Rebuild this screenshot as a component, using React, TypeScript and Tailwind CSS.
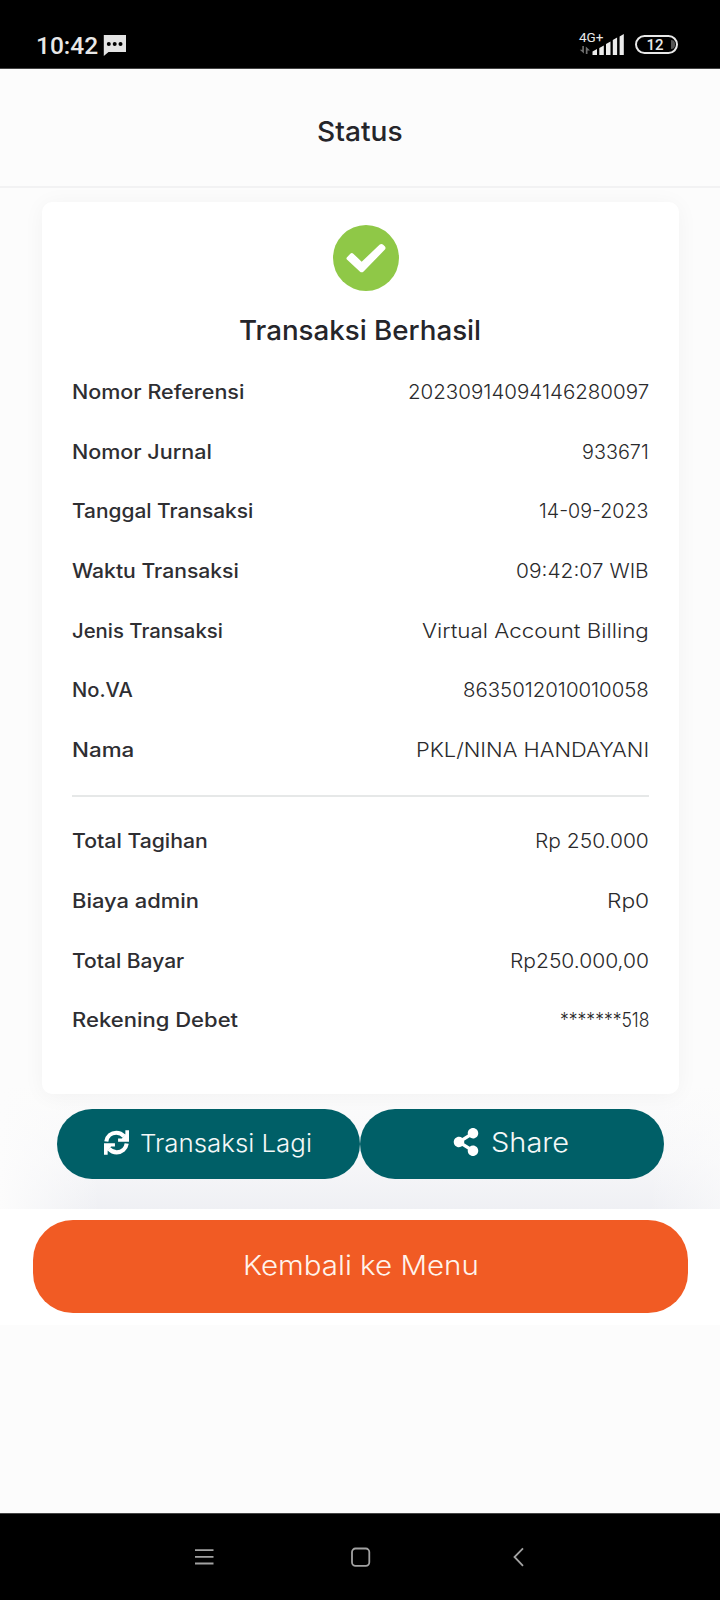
import { useLayoutEffect, useRef, useState } from "react";
import { FaShareAlt } from "react-icons/fa";

type FitProps = { text: string; width: number; className?: string; right?: boolean };

/* Text stretched horizontally to an exact advance width. */
function Fit({ text, width, className = "", right = false }: FitProps) {
  const ref = useRef<HTMLSpanElement>(null);
  const [scale, setScale] = useState(1);
  useLayoutEffect(() => {
    if (ref.current) setScale(width / ref.current.offsetWidth);
  }, [text, width]);
  return (
    <span className={`flex ${right ? "justify-end" : "justify-start"} ${className}`} style={{ width }}>
      <span
        ref={ref}
        className={`shrink-0 whitespace-nowrap ${right ? "origin-right" : "origin-left"}`}
        style={{ transform: `scaleX(${scale})` }}
      >
        {text}
      </span>
    </span>
  );
}

type Row = [label: string, labelWidth: number, value: string, valueWidth: number];

const details: Row[] = [
  ["Nomor Referensi", 172, "20230914094146280097", 241],
  ["Nomor Jurnal", 140, "933671", 67],
  ["Tanggal Transaksi", 181, "14-09-2023", 110],
  ["Waktu Transaksi", 167, "09:42:07 WIB", 133],
  ["Jenis Transaksi", 151, "Virtual Account Billing", 227],
  ["No.VA", 61, "8635012010010058", 186],
  ["Nama", 62, "PKL/NINA HANDAYANI", 233],
];

const totals: Row[] = [
  ["Total Tagihan", 136, "Rp 250.000", 114],
  ["Biaya admin", 127, "Rp0", 42],
  ["Total Bayar", 112, "Rp250.000,00", 139],
  ["Rekening Debet", 166, "*******518", 89],
];

function Rows({ rows }: { rows: Row[] }) {
  return (
    <dl>
      {rows.map(([label, lw, value, vw]) => (
        <div key={label} className="flex h-[59.6px] items-center justify-between pt-[1px] text-[19.5px]">
          <dt className="pl-[0.5px] font-medium text-[#2e2e32]">
            <Fit text={label} width={lw} />
          </dt>
          <dd className="font-light text-[#2a2a2c]">
            <Fit text={value} width={vw} right />
          </dd>
        </div>
      ))}
    </dl>
  );
}

function RefreshIcon() {
  return (
    <svg className="-mt-[2px] -ml-[1px] size-[25px] shrink-0" viewBox="0 0 24 24">
      <path d="M2.2 11C3 5.8 7 2.6 11.8 2.6c3 0 5.500 1.200 7.500 3.400" fill="none" stroke="#fff" strokeWidth="4" />
      <path d="M24 .3V11.200H13.500V8.200H17.200L20.500 4V.3z" fill="#fff" />
      <path d="M21.8 13C21 18.200 17 21.400 12.200 21.400c-3 0-5.500-1.200-7.500-3.400" fill="none" stroke="#fff" strokeWidth="4" />
      <path d="M0 23.700V12.800H10.500V15.800H6.800L3.500 20V23.700z" fill="#fff" />
    </svg>
  );
}

function StatusBar() {
  return (
    <div className="flex h-[69px] items-start justify-between border-b border-[#444] bg-black pr-[42px] pl-[36px] text-[#e8e8e8]">
      <div className="flex pt-[30px] font-[Roboto]">
        <Fit text="10:42" width={62} className="text-[24.5px] leading-[32px] font-medium" />
        <svg className="mt-[5px] ml-[5px] h-[21px] w-[23px]" viewBox="0 0 23 21">
          <path d="M.8 0h22.2v17H5.5L.8 21z" fill="#e4e4e4" />
          <circle cx="5.8" cy="9" r="2" />
          <circle cx="11.7" cy="9" r="2" />
          <circle cx="17.5" cy="9" r="2" />
        </svg>
      </div>
      <div className="flex font-[Roboto]">
        <div className="flex w-[46px] flex-col pt-[30px]">
          <span className="h-[14px] text-[13.5px] leading-[15px]">4G+</span>
        </div>
        <svg className="-ml-[46px] h-[25px] w-[46px] translate-y-[31px]" viewBox="0 0 46 25">
          <path d="M3.3 15h1.6v7.5L.8 18.8h2.5zM6.8 23V15.5l4.2 4H8.5V23z" fill="#707070" />
          <path
            d="M13.5 20.5l4.500-2.500v6h-4.500zM20.300 17l4.500-2.500v9.500h-4.500zM27 13l4.500-2.500v13.500H27zM33.800 9l4.300-2.500v17.500h-4.300zM40.600 5.500l4.200-2.500v21h-4.200z"
            fill="#ececec"
          />
        </svg>
        <div className="mt-[34.5px] ml-[10px] flex h-[19px] w-[43px] items-center justify-center rounded-full border-2 border-[#e8e8e8] pl-[2px] text-[15px] leading-none font-medium">
          <span className="flex-1 pt-[2px] text-center">12</span>
          <span className="mr-[1px] h-[9px] w-[4px] rounded-r-full bg-[#555]" />
        </div>
      </div>
    </div>
  );
}

export default function App() {
  return (
    <div className="flex h-[1600px] w-[720px] flex-col overflow-hidden bg-[#fcfcfc] font-[Inter,sans-serif]">
      <StatusBar />
      <header className="flex h-[118.5px] shrink-0 items-center justify-center border-b-2 border-[#f2f2f3] pt-[9px] text-[#25252a]">
        <Fit text="Status" width={86} className="text-[27.5px] font-medium" />
      </header>

      <main className="flex h-[1021px] shrink-0 flex-col bg-[linear-gradient(to_right,#fcfcfc_0%,#fcfcfc00_14%,#fcfcfc00_90%,#fcfcfc88_100%),linear-gradient(to_bottom,#fcfcfc_88%,#f7f7f9_95%,#eff0f4_100%)] pt-[14px]">
        <section className="mx-[42px] flex h-[892.5px] w-[637px] shrink-0 flex-col rounded-[10px] bg-white pr-[30px] pl-[29.5px] pt-[23.5px] shadow-[0_2px_22px_rgba(0,0,0,0.045)]">
          <svg className="ml-[261.5px] size-[66px] shrink-0" viewBox="0 0 66 66">
            <circle cx="33" cy="33" r="33" fill="#8fc847" />
            <path
              d="M13.800 32.600L17.300 28.700Q18.800 27.300 20.300 28.700L28.700 36.800L46.500 19.700Q48.500 18.200 50.200 19.800L52 21.600Q53.200 23.200 51.700 24.800L30.600 46.500Q28.700 48.200 26.800 46.500L13.900 34.600Q13 33.600 13.800 32.600z"
              fill="#fff"
            />
          </svg>
          <h1 className="mt-[18.5px] flex h-[42px] items-center justify-center text-[27.5px] font-medium text-[#25252a]">
            <Fit text="Transaksi Berhasil" width={242} />
          </h1>
          <div className="mt-[11px]">
            <Rows rows={details} />
          </div>
          <hr className="mt-[15px] mb-[15px] border-0 border-t-2 border-[#e6e8e8]" />
          <Rows rows={totals} />
        </section>

        <div className="mt-[14.5px] flex px-[56.5px] text-[#f4f8f8]">
          <button className="flex h-[70px] w-[304px] items-center rounded-full bg-[#005f67] pl-[48px]">
            <RefreshIcon />
            <Fit text="Transaksi Lagi" width={172} className="ml-[11.5px] text-[24.5px] font-light" />
          </button>
          <button className="flex h-[70px] w-[304px] items-center rounded-full bg-[#005f67] pl-[92px]">
            <FaShareAlt className="-mt-[4px] size-[28px] text-white" />
            <Fit text="Share" width={78} className="-mt-[1px] ml-[11.5px] text-[27.5px] font-light" />
          </button>
        </div>
      </main>

      <footer className="flex h-[116px] shrink-0 items-center bg-white pr-[32px] pl-[33px]">
        <button className="flex h-[93px] w-[655px] items-center justify-center rounded-[40px] bg-[#f15b24] pb-[1px] text-[#fff4ec]">
          <Fit text="Kembali ke Menu" width={236} className="text-[27.5px] font-light" />
        </button>
      </footer>

      <div className="flex-1" />

      <nav className="flex h-[87px] shrink-0 items-start border-t border-[#444] bg-black pt-[32px] pl-[194px]">
        <svg className="h-[22px] w-[330px]" viewBox="0 0 330 22" fill="none" stroke="#a2a2a2" strokeWidth="1.8">
          <path d="M1 4.2H19.5M1 10.8H19.5M1 17.5H19.5" />
          <rect x="158" y="2.5" width="17.3" height="17.3" rx="3.5" />
          <path d="M329 2.3L320.5 11L329 19.8" />
        </svg>
      </nav>
    </div>
  );
}
